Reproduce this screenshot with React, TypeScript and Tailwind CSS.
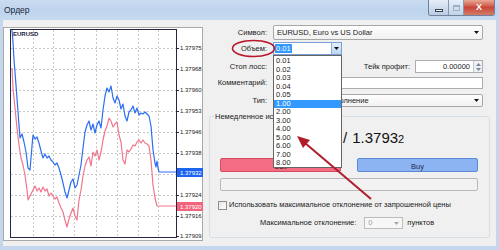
import React from "react";

type P = [number, number];

const bluePts: P[] = [
  [12, 30], [13, 42], [14, 60], [16, 85], [18, 112], [20, 138], [22, 134], [24, 142], [26, 152], [28, 168], [30, 170],
  [32, 146], [33, 135], [35, 139], [37, 137], [39, 143], [41, 151], [43, 158], [45, 154], [47, 158], [49, 156],
  [51, 160], [53, 162], [55, 165], [57, 163], [59, 168], [61, 175], [63, 183], [65, 192], [67, 198], [69, 190],
  [71, 182], [73, 179], [75, 188], [77, 185], [79, 175], [81, 165], [83, 148], [85, 132], [87, 125], [89, 121],
  [91, 130], [93, 124], [95, 133], [97, 125], [99, 121], [101, 128], [103, 110], [105, 96], [107, 88], [109, 92],
  [111, 86], [113, 98], [115, 103], [117, 96], [119, 100], [121, 109], [123, 104], [125, 116], [127, 121],
  [129, 112], [131, 110], [133, 106], [135, 113], [137, 108], [139, 115], [141, 113], [143, 114], [145, 112],
  [147, 114], [149, 116], [151, 126], [153, 150], [155, 163], [156, 167], [157, 161], [158, 168], [159, 172],
  [176, 172],
];

const redPts: P[] = [
  [12, 68], [13, 88], [15, 108], [17, 128], [19, 145], [21, 158], [23, 165], [25, 175], [27, 190], [28, 200],
  [30, 196], [33, 190], [35, 186], [37, 191], [39, 188], [41, 192], [43, 187], [45, 191], [47, 189], [49, 196],
  [51, 193], [53, 196], [55, 199], [57, 197], [59, 203], [61, 208], [63, 212], [65, 220], [67, 227], [69, 219],
  [71, 213], [73, 208], [75, 216], [77, 220], [79, 200], [81, 190], [83, 176], [85, 166], [87, 160], [89, 157],
  [91, 166], [93, 152], [95, 156], [97, 150], [99, 160], [101, 152], [103, 140], [105, 131], [107, 126],
  [109, 118], [111, 121], [113, 127], [115, 124], [117, 122], [119, 135], [121, 142], [123, 160], [125, 164],
  [127, 150], [129, 152], [131, 149], [133, 145], [135, 146], [137, 142], [139, 140], [141, 143], [143, 140],
  [145, 143], [147, 144], [149, 146], [151, 160], [153, 185], [155, 198], [157, 206], [176, 206],
];

const pts = (p: P[]) => p.map(([x, y]) => `${x},${y}`).join(" ");

const gridX = [33, 53, 74, 96, 117, 138, 158];
const gridY = [48, 69, 90, 111, 132, 153, 174, 195, 216];

const axisLabels: { y: number; t: string }[] = [
  { y: 48, t: "1.37975" },
  { y: 69, t: "1.37968" },
  { y: 90, t: "1.37960" },
  { y: 111, t: "1.37953" },
  { y: 132, t: "1.37946" },
  { y: 153, t: "1.37938" },
  { y: 195, t: "1.37924" },
  { y: 216, t: "1.37916" },
  { y: 236, t: "1.37909" },
];

function Chart() {
  return (
    <svg width="200" height="214" viewBox="3 27 200 214" style={{ display: "block" }}>
      <rect x="3.5" y="27.5" width="199" height="213" fill="#ffffff" stroke="#a9a9a9" />
      {gridX.map((x) => (
        <line key={"gx" + x} x1={x + 0.5} y1="30" x2={x + 0.5} y2="237" stroke="#c9c9c9" strokeDasharray="2 2" />
      ))}
      {gridY.map((y) => (
        <line key={"gy" + y} x1="11" y1={y + 0.5} x2="176" y2={y + 0.5} stroke="#c9c9c9" strokeDasharray="2 2" />
      ))}
      <polyline points={pts(redPts)} fill="none" stroke="#f0768e" strokeWidth="1.2" strokeLinejoin="round" />
      <polyline points={pts(bluePts)} fill="none" stroke="#2c6ef0" strokeWidth="1.2" strokeLinejoin="round" />
      <rect x="10.5" y="29.5" width="166" height="208" fill="none" stroke="#262640" />
      {axisLabels.map((l) => (
        <g key={l.t}>
          <line x1="176" y1={l.y + 0.5} x2="179" y2={l.y + 0.5} stroke="#262640" />
          <text x="180" y={l.y + 2.2} fontSize="6" fontFamily="Liberation Sans, Arial, sans-serif" fill="#1a1a1a">
            {l.t}
          </text>
        </g>
      ))}
      <rect x="177" y="168" width="26" height="9" fill="#1f64f0" />
      <text x="180" y="174.6" fontSize="6" fontFamily="Liberation Sans, Arial, sans-serif" fill="#ffffff">
        1.37932
      </text>
      <rect x="177" y="202" width="26" height="9" fill="#f2647c" />
      <text x="180" y="208.6" fontSize="6" fontFamily="Liberation Sans, Arial, sans-serif" fill="#ffffff">
        1.37920
      </text>
      <text x="13" y="36" fontSize="6" fontWeight="bold" fontFamily="Liberation Sans, Arial, sans-serif" fill="#1a1a40">
        EURUSD
      </text>
    </svg>
  );
}

function Tri({ color = "#111" }: { color?: string }) {
  return (
    <svg width="5" height="3" viewBox="0 0 5 3" style={{ display: "block" }}>
      <path d="M0 0H5L2.5 3Z" fill={color} />
    </svg>
  );
}

function TriUp({ color = "#555" }: { color?: string }) {
  return (
    <svg width="5" height="3" viewBox="0 0 5 3" style={{ display: "block" }}>
      <path d="M0 3H5L2.5 0Z" fill={color} />
    </svg>
  );
}

const volumes = ["0.01", "0.02", "0.03", "0.04", "0.05", "1.00", "2.00", "3.00", "4.00", "5.00", "6.00", "7.00", "8.00"];

export default function App() {
  return (
    <div className="relative h-[250px] w-[499px] overflow-hidden bg-[#c5d7ec] font-['Liberation_Sans',Arial,sans-serif] text-[7.5px] leading-none text-[#1b1b1b]">
      {/* title bar */}
      <div className="flex h-[20px] items-start justify-between bg-gradient-to-b from-[#cadcf0] via-[#bed4ee] to-[#c6d9ee]">
        <span className="ml-[4px] mt-[5px] text-[8.5px] leading-[10px] text-[#16273c]">Ордер</span>
        <div className="mr-[4px] flex h-[16px] overflow-hidden rounded-b-[3px] border border-t-0 border-[#6f819b]">
          <div className="flex w-[20px] items-center justify-center border-r border-[#8799b2] bg-gradient-to-b from-[#e6eef8] to-[#b9cce3]">
            <div className="mt-[5px] h-[3px] w-[8px] border border-[#33404f] bg-white" />
          </div>
          <div className="flex w-[15px] items-center justify-center border-r border-[#8799b2] bg-gradient-to-b from-[#e6eef8] to-[#c3d4e8]">
            <div className="h-[6px] w-[7px] border border-t-2 border-[#9fb0c6]" />
          </div>
          <div className="flex w-[30px] items-center justify-center bg-gradient-to-b from-[#e8a898] via-[#c8473a] to-[#d27a66]">
            <span className="text-[9px] font-bold leading-none text-white">X</span>
          </div>
        </div>
      </div>

      {/* client area */}
      <div className="mx-[3px] flex h-[226px] bg-[#f0f0f0]">
        <div className="mt-[7px] h-[214px] w-[200px] shrink-0">
          <Chart />
        </div>

        <div className="flex min-w-0 flex-1 flex-col pr-[13px] pt-[5px]">
          {/* symbol */}
          <div className="flex h-[15px] items-center">
            <span className="mr-[6px] w-[64px] shrink-0 text-right">Символ:</span>
            <div className="flex h-full flex-1 items-center justify-between rounded-[2px] border border-[#a7a7a7] bg-gradient-to-b from-[#ffffff] to-[#f1f1f1] pl-[3px] pr-[3px]">
              <span>EURUSD, Euro vs US Dollar</span>
              <Tri />
            </div>
          </div>

          {/* volume */}
          <div className="mt-[2px] flex h-[13px] items-center">
            <span className="mr-[6px] w-[64px] shrink-0 text-right">Объем:</span>
            <div className="flex h-full w-[69px] items-center justify-between border border-[#7b9ed3] bg-white">
              <span className="ml-[1px] bg-[#3399ff] px-[1px] py-[1px] text-white">0.01</span>
              <div className="flex h-full w-[10px] items-center justify-center border-l border-[#8fb0de] bg-gradient-to-b from-[#e4effb] to-[#bcd5f2]">
                <Tri />
              </div>
            </div>
          </div>

          {/* stop loss / take profit */}
          <div className="mt-[5px] flex h-[13px] items-center">
            <span className="mr-[6px] w-[64px] shrink-0 text-right">Стоп лосс:</span>
            <div className="h-full w-[67px] border border-[#abadb3] bg-white" />
            <span className="mr-[5px] flex-1 text-right">Тейк профит:</span>
            <div className="flex h-full w-[68px] items-center border border-[#abadb3] bg-white">
              <span className="flex-1 pr-[3px] text-right">0.00000</span>
              <div className="flex h-full w-[9px] flex-col items-center justify-center gap-[2px] border-l border-[#c5c5c5] bg-[#eef1f6]">
                <TriUp color="#7a8597" />
                <Tri color="#7a8597" />
              </div>
            </div>
          </div>

          {/* comment */}
          <div className="mt-[4px] flex h-[12px] items-center">
            <span className="mr-[6px] w-[64px] shrink-0 text-right">Комментарий:</span>
            <div className="h-full flex-1 border border-[#abadb3] bg-white" />
          </div>

          {/* type */}
          <div className="mt-[5px] flex h-[13px] items-center">
            <span className="mr-[6px] w-[64px] shrink-0 text-right">Тип:</span>
            <div className="flex h-full flex-1 items-center justify-between rounded-[2px] border border-[#a7a7a7] bg-gradient-to-b from-[#ffffff] to-[#f1f1f1] pl-[3px] pr-[3px]">
              <span>Немедленное исполнение</span>
              <Tri />
            </div>
          </div>

          {/* group */}
          <fieldset className="ml-[6px] mt-[5px] h-[126px] w-[281px] shrink-0 rounded-[3px] border border-[#d5dfe5]">
            <legend className="ml-[4px] px-[1px] leading-[9px]">Немедленное исполнение</legend>
            <div className="mt-[9px] flex h-[18px] items-baseline pl-[76px] text-[#111]">
              <span className="text-[15px]">1.3792</span>
              <span className="text-[11px]">0</span>
              <span className="ml-[5px] mr-[5px] text-[15px]">/</span>
              <span className="text-[15px]">1.3793</span>
              <span className="text-[11px]">2</span>
            </div>
            <div className="ml-[10px] mt-[10px] flex h-[14px] gap-[16px]">
              <div className="flex w-[121px] items-end justify-center rounded-[2px] border border-[#d54b62] bg-[#f46d84] pb-[1px] text-[#2a1a20]">
                Sell
              </div>
              <div className="flex w-[121px] items-end justify-center rounded-[2px] border border-[#5c89d6] bg-[#8db4f2] pb-[1px] text-[#1a2750]">
                Buy
              </div>
            </div>
            <div className="ml-[10px] mt-[6px] h-[13px] w-[258px] rounded-[2px] border border-[#b9b9b9] bg-[#f2f2f2]" />
            <div className="ml-[8px] mt-[9px] flex h-[10px] items-center">
              <div className="h-[9px] w-[9px] border border-[#8f8f8f] bg-gradient-to-br from-[#e6e6e6] to-[#ffffff]" />
              <span className="ml-[2px]">Использовать максимальное отклонение от запрошенной цены</span>
            </div>
            <div className="ml-[50px] mt-[7px] flex h-[12px] items-center">
              <span>Максимальное отклонение:</span>
              <div className="ml-[8px] flex h-full w-[39px] items-center justify-between border border-[#bcbcbc] bg-[#f7f7f7] pl-[3px] pr-[3px]">
                <span className="text-[#a3a3a3]">0</span>
                <Tri color="#a8a8a8" />
              </div>
              <span className="ml-[4px]">пунктов</span>
            </div>
          </fieldset>
        </div>
      </div>

      {/* dropdown list overlay */}
      <div className="absolute left-[273px] top-[55px] h-[113px] w-[69px] border border-[#646464] bg-white pt-[1px]">
        {volumes.map((v) => (
          <div
            key={v}
            className={
              v === "1.00"
                ? "h-[8.5px] bg-[#3399ff] pl-[2px] leading-[8.5px] text-white"
                : "h-[8.5px] pl-[2px] leading-[8.5px] text-[#1b1b1b]"
            }
          >
            {v}
          </div>
        ))}
      </div>

      {/* annotations */}
      <svg className="pointer-events-none absolute left-0 top-0" width="499" height="250" viewBox="0 0 499 250">
        <ellipse cx="253.5" cy="48.5" rx="21" ry="8" fill="none" stroke="#b8182b" strokeWidth="1.6" />
        <line x1="371" y1="199" x2="305" y2="143" stroke="#b01c2a" strokeWidth="2" />
        <path d="M297 136 L310 140 L303 148 Z" fill="#b01c2a" />
      </svg>
    </div>
  );
}
